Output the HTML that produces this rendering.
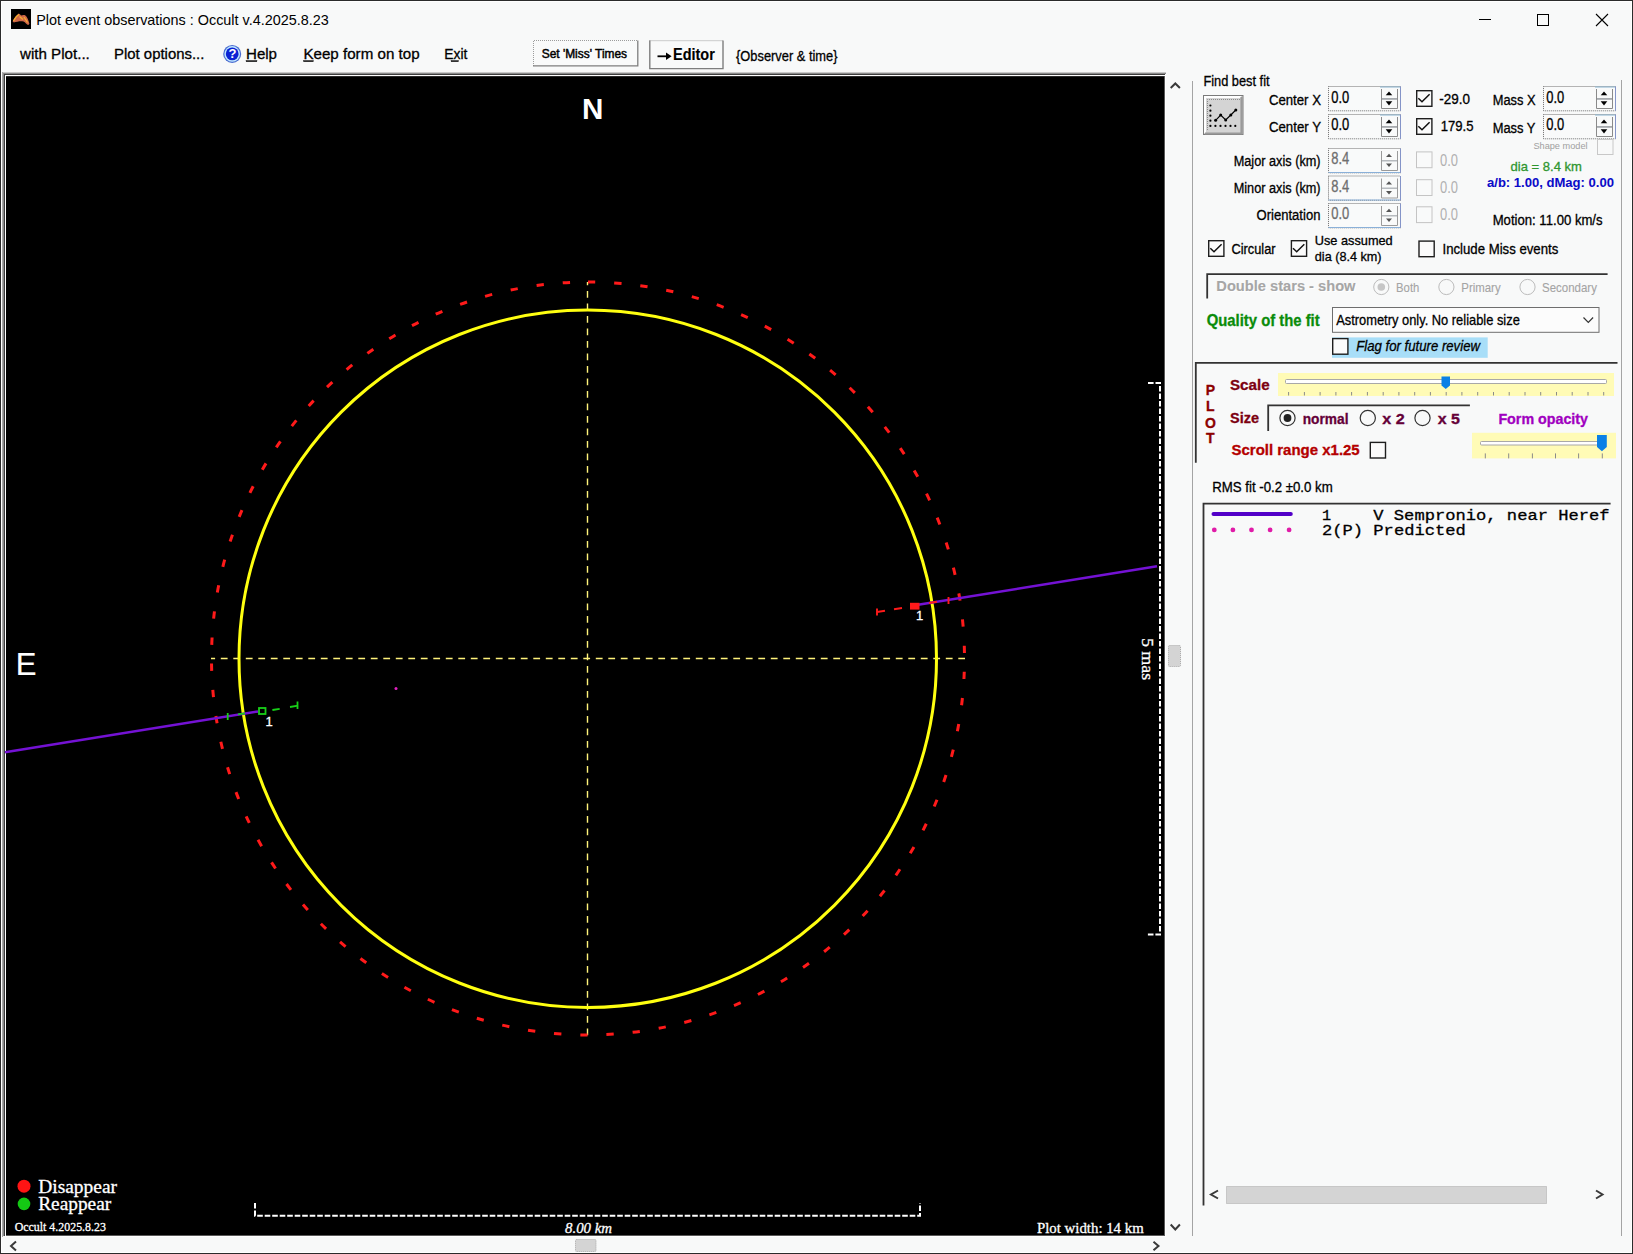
<!DOCTYPE html>
<html><head><meta charset="utf-8">
<style>
html,body{margin:0;padding:0;width:1633px;height:1254px;overflow:hidden;background:#f8f9f9;}
svg{display:block;}
text{font-family:"Liberation Sans",sans-serif;}
.ser{font-family:"Liberation Serif",serif;}
.mono,.mono text{font-family:"Liberation Mono",monospace;}
</style></head><body>
<svg width="1633" height="1254" viewBox="0 0 1633 1254">
<!-- window bg & border -->
<rect x="0" y="0" width="1633" height="1254" fill="#f8f9f9"/>
<rect x="0.5" y="0.5" width="1632" height="1253" fill="none" stroke="#2b2b2b"/>
<rect x="1.5" y="1.5" width="1630" height="1251" fill="none" stroke="#ffffff"/>

<!-- title bar -->
<rect x="11" y="9" width="20" height="20" fill="#000"/>
<path d="M12.6 21.3 C14 18.5 16.5 15 18.8 13.6 C19.8 14.2 20.5 15.2 21.2 15.6 C22.5 15 24 14.8 25.4 15.4 C27 16.8 28.6 20 29.4 23.8 C29 25 28 25.2 27.2 24.6 C25.6 22.8 24 21.4 22.2 21.2 C19.5 21 16.5 21.6 13.8 22.6 Z" fill="#d06848"/>
<path d="M13.5 21 C15 18 17 15.5 19 14.5 M19.5 16.5 L23 19.5 M24 17 L27.5 22.5" fill="none" stroke="#f5b030" stroke-width="1.2"/>
<text x="36.2" y="25" font-size="14.4" textLength="292.5" lengthAdjust="spacingAndGlyphs" fill="#000">Plot event observations : Occult v.4.2025.8.23</text>
<rect x="1479" y="19" width="12" height="1" fill="#000"/>
<rect x="1537.5" y="14.5" width="11" height="11" fill="none" stroke="#000"/>
<path d="M1596 14 L1608 26 M1608 14 L1596 26" stroke="#000" stroke-width="1.1" fill="none"/>

<!-- menu -->
<g font-size="15" fill="#000" stroke="#000" stroke-width="0.3">
<text x="20" y="58.9" textLength="69.8" lengthAdjust="spacingAndGlyphs">with Plot...</text>
<text x="114" y="58.9" textLength="90.4" lengthAdjust="spacingAndGlyphs">Plot options...</text>
<text x="246" y="58.9" textLength="31" lengthAdjust="spacingAndGlyphs">Help</text>
<rect x="246" y="60.5" width="11" height="1.2"/>
<text x="303.4" y="58.9" textLength="116.2" lengthAdjust="spacingAndGlyphs">Keep form on top</text>
<rect x="303.5" y="60.5" width="10" height="1.2"/>
<text x="444.3" y="58.9" textLength="23.1" lengthAdjust="spacingAndGlyphs">Exit</text>
<rect x="451" y="60.5" width="7.6" height="1.2"/>
</g>
<circle cx="232.2" cy="53.9" r="9" fill="#4a6cd0"/>
<circle cx="232.2" cy="53.9" r="7.8" fill="#bfe8ff"/>
<circle cx="232.2" cy="53.9" r="6.4" fill="#0a22d4"/>
<text x="232.6" y="58.4" font-size="13" font-weight="bold" fill="#fff" text-anchor="middle">?</text>

<!-- buttons -->
<rect x="533" y="40" width="105.5" height="26.5" fill="#f9fafa"/>
<path d="M533.5 66 V40.5 H638" fill="none" stroke="#9c9c9c" stroke-dasharray="1 1"/>
<path d="M637.8 40.5 V65.8 H533" fill="none" stroke="#7e7e7e" stroke-width="1.3"/>
<text x="541.7" y="57.6" font-size="12.2" textLength="85.4" lengthAdjust="spacingAndGlyphs" fill="#000" stroke="#000" stroke-width="0.45">Set 'Miss' Times</text>
<rect x="649" y="40" width="74.5" height="29" fill="#f9fafa"/>
<path d="M649.5 40.7 H723" fill="none" stroke="#9c9c9c" stroke-dasharray="1 1"/>
<path d="M649.8 40.5 V68.6 H723 V40.5" fill="none" stroke="#7e7e7e" stroke-width="1.4"/>
<path d="M657.5 56.3 H668" stroke="#000" stroke-width="1.8"/>
<path d="M666 52.5 L671.6 56.3 L666 60.1 Z" fill="#000"/>
<text x="673.1" y="60.2" font-size="15.8" font-weight="bold" textLength="41.7" lengthAdjust="spacingAndGlyphs" fill="#000" stroke="#000" stroke-width="0.15">Editor</text>
<text x="736" y="61" font-size="14.5" textLength="101.5" lengthAdjust="spacingAndGlyphs" fill="#000" stroke="#000" stroke-width="0.3">{Observer &amp; time}</text>

<!-- PLOT FRAME -->
<rect x="2" y="72" width="1164" height="1" fill="#c8c8c8"/>
<rect x="2" y="73" width="1164" height="1" fill="#8a8a8a"/>
<rect x="3" y="74" width="1162" height="1" fill="#3e3e3e"/>
<rect x="2" y="72" width="1" height="1165" fill="#a8a8a8"/>
<rect x="3" y="73" width="1" height="1163" fill="#8c8c8c"/>
<rect x="4" y="74" width="1" height="1162" fill="#3c3c3c"/>
<rect x="5" y="75" width="1161" height="1" fill="#ffffff"/>
<rect x="5" y="75" width="1" height="1162" fill="#ffffff"/>
<rect x="1165" y="75" width="1" height="1162" fill="#ffffff"/>
<rect x="5" y="1236" width="1161" height="1" fill="#ffffff"/>
<rect x="6" y="76" width="1159" height="1160" fill="#585858"/>
<rect x="6" y="76" width="1158" height="1" fill="#2a2a2a"/>
<rect x="6" y="77" width="1158" height="1158" fill="#000"/>

<!-- plot content -->
<g id="plot">
<text x="592.6" y="118.7" font-size="29.6" font-weight="bold" fill="#fff" text-anchor="middle">N</text>
<text x="15.8" y="675.2" font-size="31" fill="#fff" stroke="#fff" stroke-width="0.2">E</text>
<!-- dashed cross -->
<line x1="211" y1="658.5" x2="965" y2="658.5" stroke="#fff27a" stroke-width="1.4" stroke-dasharray="6.8 5.7" stroke-dashoffset="2.7"/>
<line x1="587.5" y1="282" x2="587.5" y2="1035.5" stroke="#fff27a" stroke-width="1.4" stroke-dasharray="6.8 5.7" stroke-dashoffset="3.5"/>
<!-- red dashed circle -->
<path d="M588 282 A376.5 376.5 0 0 1 588 1035 A376.5 376.5 0 0 1 588 282" fill="none" stroke="#ff1a1a" stroke-width="3" stroke-dasharray="7.3 18.984"/>
<!-- yellow circle -->
<circle cx="587.75" cy="658.75" r="348.75" fill="none" stroke="#ffff10" stroke-width="3"/>
<!-- chord -->
<line x1="5" y1="752.3" x2="258" y2="711.4" stroke="#7412d4" stroke-width="2.5"/>
<line x1="915" y1="605.3" x2="1157" y2="566.3" stroke="#7412d4" stroke-width="2.5"/>
<!-- green markers -->
<g stroke="#18d018" fill="none" stroke-width="1.8">
<line x1="227.7" y1="713" x2="227.7" y2="720"/>
<line x1="238" y1="714.4" x2="245" y2="713.3"/>
<rect x="259" y="708" width="6.5" height="6" fill="none"/>
<line x1="272.4" y1="710" x2="279.7" y2="708.8"/>
<line x1="290" y1="707" x2="298" y2="705.6"/>
<line x1="297.5" y1="701.5" x2="297.5" y2="709"/>
</g>
<text x="265.5" y="725.5" font-size="13" fill="#fff" stroke="#fff" stroke-width="0.3">1</text>
<!-- red markers -->
<g stroke="#ff1a1a" fill="none" stroke-width="1.9">
<line x1="877" y1="608.5" x2="877" y2="615.5"/>
<line x1="877" y1="612" x2="885" y2="610.7"/>
<line x1="894" y1="609.3" x2="902" y2="608"/>
<rect x="911" y="603.8" width="7.5" height="4.8" fill="#ff1a1a" stroke-width="2"/>
<line x1="929" y1="603" x2="937" y2="601.7"/>
<line x1="948.5" y1="597" x2="948.5" y2="604"/>
</g>
<text x="916" y="620.3" font-size="13" fill="#fff" stroke="#fff" stroke-width="0.3">1</text>
<circle cx="396" cy="688.5" r="1.5" fill="#e020c0"/>
<!-- scale bars -->
<g stroke="#fff" stroke-width="2" fill="none" stroke-dasharray="5.6 1.9">
<path d="M255 1203 L255 1215.8 L920 1215.8 L920 1203"/>
<path d="M1148 383 L1160 383 L1160 934.5 L1147 934.5"/>
</g>
<text x="565" y="1233" class="ser" font-size="15.5" font-style="italic" fill="#fff" textLength="47" lengthAdjust="spacingAndGlyphs" stroke="#fff" stroke-width="0.3">8.00 km</text>
<text x="1037" y="1233" class="ser" font-size="15" fill="#fff" textLength="106.7" lengthAdjust="spacingAndGlyphs" stroke="#fff" stroke-width="0.3">Plot width: 14 km</text>
<text transform="translate(1141.5 637.9) rotate(90)" class="ser" font-size="17" fill="#fff" textLength="42.4" lengthAdjust="spacingAndGlyphs" stroke="#fff" stroke-width="0.3">5 mas</text>
<!-- legend -->
<circle cx="24" cy="1186.2" r="6.5" fill="#ff1414"/>
<circle cx="24" cy="1203.9" r="6.3" fill="#14c814"/>
<text x="38.2" y="1192.7" class="ser" font-size="19.4" fill="#fff" textLength="78.8" lengthAdjust="spacingAndGlyphs" stroke="#fff" stroke-width="0.3">Disappear</text>
<text x="38.2" y="1210.2" class="ser" font-size="19.4" fill="#fff" textLength="73" lengthAdjust="spacingAndGlyphs" stroke="#fff" stroke-width="0.3">Reappear</text>
<text x="14.7" y="1231" class="ser" font-size="13" fill="#fff" textLength="91.2" lengthAdjust="spacingAndGlyphs" stroke="#fff" stroke-width="0.3">Occult 4.2025.8.23</text>
</g>

<!-- scrollbars of plot -->
<path d="M1170.7 88 L1175.3 83.5 L1179.9 88" stroke="#3a3a3a" stroke-width="2" fill="none"/>
<path d="M1170.7 1224.5 L1175.3 1229.5 L1179.9 1224.5" stroke="#3a3a3a" stroke-width="2" fill="none"/>
<rect x="1168.5" y="645.5" width="12" height="21" rx="1" fill="#d4d4d4" stroke="#a8a8a8" stroke-dasharray="1 1"/>
<path d="M16 1241.5 L11 1246 L16 1250.5" stroke="#3a3a3a" stroke-width="2" fill="none"/>
<path d="M1153.5 1241.8 L1158.5 1246 L1153.5 1250.3" stroke="#3a3a3a" stroke-width="2" fill="none"/>
<rect x="575.5" y="1239.5" width="20.5" height="12" rx="1" fill="#d4d4d4" stroke="#a8a8a8" stroke-dasharray="1 1"/>


<!-- RIGHT PANEL -->
<defs>
<g id="nud">
<rect x="0.5" y="0.5" width="72" height="24.3" fill="#f9fafa" stroke="#6e6e6e" stroke-dasharray="1 1"/>
<line x1="72.5" y1="0.5" x2="72.5" y2="24.8" stroke="#8494c8"/>
<line x1="52" y1="1" x2="72" y2="1" stroke="#8ab4d0"/>
<path d="M53.5 3 V22.5 H69.5 V3" fill="none" stroke="#8a8a8a"/>
<rect x="54" y="12" width="15" height="1.8" fill="#a6aaae"/>
<path d="M57.7 9.3 L61 5.4 L64.3 9.3 Z" fill="#000"/>
<path d="M57.7 15.2 L64.3 15.2 L61 19.5 Z" fill="#000"/>
</g>
<g id="nudd">
<rect x="0.5" y="0.5" width="72" height="24.3" fill="#f9fafa" stroke="#6e6e6e" stroke-dasharray="1 1"/>
<line x1="72.5" y1="0.5" x2="72.5" y2="24.8" stroke="#8494c8"/>
<line x1="0.5" y1="24.5" x2="72" y2="24.5" stroke="#8ab0d8"/>
<path d="M53.5 3 V22.5 H69.5 V3" fill="none" stroke="#9a9a9a"/>
<rect x="54" y="12" width="15" height="1.5" fill="#b6babe"/>
<path d="M58 9 L61 5.8 L64 9 Z" fill="#555"/>
<path d="M58 15.5 L64 15.5 L61 19 Z" fill="#555"/>
</g>
<g id="chk">
<rect x="0.7" y="0.7" width="15.2" height="15.6" fill="#fbfbfb" stroke="#1e1e1e" stroke-width="1.4"/>
</g>
<g id="chkd">
<rect x="0.5" y="0.5" width="15.5" height="15.8" fill="#f9fafa" stroke="#c4c4c4" stroke-width="1"/>
</g>
</defs>

<rect x="1192" y="81" width="1" height="1155" fill="#a4a4a4"/>
<rect x="1621" y="80" width="1" height="1156" fill="#a4a4a4"/>

<g font-size="14" fill="#000" stroke="#000" stroke-width="0.3">
<text x="1203.4" y="86.2" textLength="66.2" lengthAdjust="spacingAndGlyphs">Find best fit</text>
<text x="1268.9" y="104.5" textLength="52.1" lengthAdjust="spacingAndGlyphs">Center X</text>
<text x="1268.9" y="132" textLength="52.1" lengthAdjust="spacingAndGlyphs">Center Y</text>
<text x="1233.7" y="165.6" textLength="86.9" lengthAdjust="spacingAndGlyphs">Major axis (km)</text>
<text x="1233.7" y="193.2" textLength="86.9" lengthAdjust="spacingAndGlyphs">Minor axis (km)</text>
<text x="1256.6" y="219.5" textLength="63.8" lengthAdjust="spacingAndGlyphs">Orientation</text>
<text x="1439.2" y="103.5" textLength="30.7" lengthAdjust="spacingAndGlyphs">-29.0</text>
<text x="1440.7" y="131.4" textLength="32.8" lengthAdjust="spacingAndGlyphs">179.5</text>
<text x="1492.7" y="105" textLength="42.8" lengthAdjust="spacingAndGlyphs">Mass X</text>
<text x="1492.7" y="132.6" textLength="42.8" lengthAdjust="spacingAndGlyphs">Mass Y</text>
<text x="1492.7" y="224.9" textLength="109.9" lengthAdjust="spacingAndGlyphs">Motion: 11.00 km/s</text>
<text x="1231.5" y="253.9" textLength="44.1" lengthAdjust="spacingAndGlyphs">Circular</text>
<text x="1314.8" y="245" font-size="13" textLength="77.9" lengthAdjust="spacingAndGlyphs">Use assumed</text>
<text x="1314.8" y="260.7" font-size="13" textLength="66.8" lengthAdjust="spacingAndGlyphs">dia (8.4 km)</text>
<text x="1442.5" y="253.5" textLength="115.8" lengthAdjust="spacingAndGlyphs">Include Miss events</text>
<text x="1212.2" y="492" textLength="120.5" lengthAdjust="spacingAndGlyphs">RMS fit -0.2 ±0.0 km</text>
</g>

<!-- fit button -->
<rect x="1203.5" y="95.5" width="39.5" height="39" fill="#d4d4d4" stroke="#7a7a7a"/>
<path d="M1205 133 V97 H1241" fill="none" stroke="#fff" stroke-width="2"/>
<path d="M1241.5 97 V133.5 H1205" fill="none" stroke="#9a9a9a" stroke-width="2.2"/>
<path d="M1207.5 130 V99.5 H1240" fill="none" stroke="#8a8a8a" stroke-dasharray="1 1"/>
<g fill="#000">
<circle cx="1210.4" cy="105.5" r="1.1"/><circle cx="1210.4" cy="110.7" r="1.1"/><circle cx="1210.4" cy="115.7" r="1.1"/><circle cx="1210.4" cy="120.7" r="1.1"/>
<circle cx="1210.4" cy="125.9" r="1.1"/><circle cx="1215.4" cy="125.9" r="1.1"/><circle cx="1220.5" cy="125.9" r="1.1"/><circle cx="1225.5" cy="125.9" r="1.1"/><circle cx="1230.5" cy="125.9" r="1.1"/><circle cx="1235.3" cy="125.9" r="1.1"/>
<circle cx="1215.6" cy="120.3" r="1.5"/><circle cx="1220.7" cy="115" r="1.5"/><circle cx="1225.7" cy="120" r="1.5"/><circle cx="1230.8" cy="115" r="1.5"/><circle cx="1235.8" cy="110" r="1.5"/>
</g>
<path d="M1215.6 120.3 L1220.7 115 L1225.7 120 L1230.8 115 L1235.8 110" fill="none" stroke="#000" stroke-width="1.1"/>

<use href="#nud" x="1328" y="86"/>
<use href="#nud" x="1328" y="114"/>
<use href="#nudd" x="1328" y="148"/>
<use href="#nudd" x="1328" y="175.5"/>
<use href="#nudd" x="1328" y="203"/>
<use href="#nud" x="1543" y="86"/>
<use href="#nud" x="1543" y="114"/>
<g font-size="15.6" fill="#000" stroke="#000" stroke-width="0.3">
<text x="1331.3" y="102.6" textLength="18" lengthAdjust="spacingAndGlyphs">0.0</text>
<text x="1331.3" y="130.4" textLength="18" lengthAdjust="spacingAndGlyphs">0.0</text>
<text x="1546.3" y="102.6" textLength="18" lengthAdjust="spacingAndGlyphs">0.0</text>
<text x="1546.3" y="130.4" textLength="18" lengthAdjust="spacingAndGlyphs">0.0</text>
</g>
<g font-size="15.6" fill="#6e6e6e" stroke="#6e6e6e" stroke-width="0.3">
<text x="1331.3" y="164.4" textLength="18" lengthAdjust="spacingAndGlyphs">8.4</text>
<text x="1331.3" y="192" textLength="18" lengthAdjust="spacingAndGlyphs">8.4</text>
<text x="1331.3" y="219.2" textLength="18" lengthAdjust="spacingAndGlyphs">0.0</text>
</g>

<use href="#chk" x="1416" y="90"/>
<use href="#chk" x="1416" y="118"/>
<path d="M1418.3 98.2 L1422 101.7 L1429.6 94.2 M1418.3 126.2 L1422 129.7 L1429.6 122.2" fill="none" stroke="#111" stroke-width="1.5"/>
<use href="#chkd" x="1416" y="151.4"/>
<use href="#chkd" x="1416" y="179.2"/>
<use href="#chkd" x="1416" y="206.3"/>
<g font-size="15.6" fill="#b0b0b0">
<text x="1440" y="165.7" textLength="18" lengthAdjust="spacingAndGlyphs">0.0</text>
<text x="1440" y="193" textLength="18" lengthAdjust="spacingAndGlyphs">0.0</text>
<text x="1440" y="220.3" textLength="18" lengthAdjust="spacingAndGlyphs">0.0</text>
</g>
<text x="1533.4" y="149" font-size="9.5" fill="#a0a0a0" textLength="54.2" lengthAdjust="spacingAndGlyphs">Shape model</text>
<rect x="1597.5" y="139.5" width="15.5" height="15" fill="none" stroke="#c8c8c8"/>
<text x="1510.6" y="170.6" font-size="13" fill="#2f962f" textLength="71.3" lengthAdjust="spacingAndGlyphs" stroke="#2f962f" stroke-width="0.3">dia = 8.4 km</text>
<text x="1487" y="187.2" font-size="13.6" font-weight="bold" fill="#0a0ac8" textLength="127" lengthAdjust="spacingAndGlyphs" stroke="#0a0ac8" stroke-width="0.05">a/b: 1.00, dMag: 0.00</text>

<use href="#chk" x="1208" y="240"/>
<use href="#chk" x="1290.7" y="240"/>
<path d="M1210.3 248.2 L1214 251.7 L1221.6 244.2 M1293 248.2 L1296.7 251.7 L1304.3 244.2" fill="none" stroke="#111" stroke-width="1.5"/>
<use href="#chk" x="1418.3" y="240.4"/>

<!-- double stars group -->
<path d="M1207.2 298.5 V274.2 H1607.6" fill="none" stroke="#333" stroke-width="1.8"/>
<text x="1217.3" y="292.1" font-size="14.5" font-weight="bold" fill="#ffffff" textLength="139.2" lengthAdjust="spacingAndGlyphs">Double stars - show</text>
<text x="1216.3" y="291.1" font-size="14.5" font-weight="bold" fill="#a6a6a6" textLength="139.2" lengthAdjust="spacingAndGlyphs" stroke="#a6a6a6" stroke-width="0.1">Double stars - show</text>
<g fill="none" stroke="#bcbcbc" stroke-width="1">
<circle cx="1381.3" cy="287" r="7.6"/>
<circle cx="1446.4" cy="287" r="7.6"/>
<circle cx="1527.5" cy="287" r="7.6"/>
</g>
<circle cx="1381.3" cy="287" r="3.8" fill="#c6c6c6"/>
<g font-size="13" fill="#a4a4a4" stroke="#a4a4a4" stroke-width="0.1">
<text x="1396.1" y="292.3" textLength="23.2" lengthAdjust="spacingAndGlyphs">Both</text>
<text x="1461.3" y="292.3" textLength="39.3" lengthAdjust="spacingAndGlyphs">Primary</text>
<text x="1542" y="292.3" textLength="54.9" lengthAdjust="spacingAndGlyphs">Secondary</text>
</g>

<!-- quality -->
<text x="1206.7" y="325.6" font-size="15.8" font-weight="bold" fill="#0a8c0a" textLength="113" lengthAdjust="spacingAndGlyphs" stroke="#0a8c0a" stroke-width="0.3">Quality of the fit</text>
<rect x="1332.5" y="307.5" width="266.5" height="24.8" fill="#fcfcfc" stroke="#6e6e6e"/>
<text x="1336.2" y="324.9" font-size="15" fill="#000" textLength="183.6" lengthAdjust="spacingAndGlyphs" stroke="#000" stroke-width="0.3">Astrometry only. No reliable size</text>
<path d="M1583.5 317.5 L1588.3 322.3 L1593.1 317.5" fill="none" stroke="#333" stroke-width="1.2"/>
<rect x="1332" y="337.4" width="155.7" height="20.4" fill="#a8def8"/>
<use href="#chk" x="1332" y="337.9"/>
<text x="1356.2" y="351" font-size="14" font-style="italic" fill="#000" textLength="123.8" lengthAdjust="spacingAndGlyphs" stroke="#000" stroke-width="0.3">Flag for future review</text>

<!-- PLOT group -->
<path d="M1195.8 462.8 V362.8 H1617.5" fill="none" stroke="#333" stroke-width="1.8"/>
<g font-size="14" font-weight="bold" fill="#8c0000" text-anchor="middle" stroke="#8c0000" stroke-width="0.3">
<text x="1210.4" y="394.5">P</text>
<text x="1210.4" y="411.4">L</text>
<text x="1210.4" y="427.6">O</text>
<text x="1210.4" y="443">T</text>
</g>
<g font-size="14.5" font-weight="bold" fill="#7c0010" stroke="#7c0010" stroke-width="0.3">
<text x="1230" y="390.3" textLength="39.6" lengthAdjust="spacingAndGlyphs">Scale</text>
<text x="1230" y="422.7" textLength="29" lengthAdjust="spacingAndGlyphs">Size</text>
<text x="1302.7" y="424" textLength="45.8" lengthAdjust="spacingAndGlyphs" fill="#640038" stroke="#640038">normal</text>
<text x="1382.3" y="424" textLength="22.5" lengthAdjust="spacingAndGlyphs" fill="#640038" stroke="#640038">x 2</text>
<text x="1437.8" y="424" textLength="22.2" lengthAdjust="spacingAndGlyphs" fill="#640038" stroke="#640038">x 5</text>
</g>
<text x="1231.5" y="455" font-size="15" font-weight="bold" fill="#b40000" textLength="128.2" lengthAdjust="spacingAndGlyphs" stroke="#b40000" stroke-width="0.3">Scroll range x1.25</text>
<text x="1498.4" y="423.5" font-size="14.5" font-weight="bold" fill="#a000c0" textLength="89.6" lengthAdjust="spacingAndGlyphs" stroke="#a000c0" stroke-width="0.3">Form opacity</text>
<use href="#chk" x="1369.6" y="441.7"/>
<path d="M1268.2 431 V405.4 H1469.9" fill="none" stroke="#333" stroke-width="1.8"/>
<g fill="none" stroke="#333" stroke-width="1.2">
<circle cx="1287.5" cy="418" r="7.6"/>
<circle cx="1367.8" cy="418" r="7.6"/>
<circle cx="1422.5" cy="418" r="7.6"/>
</g>
<circle cx="1287.5" cy="418" r="3.9" fill="#222"/>

<!-- sliders -->
<rect x="1278" y="373" width="336" height="23" fill="#fffbb6"/>
<rect x="1285.5" y="379.5" width="321" height="4" rx="1" fill="#ffffff" stroke="#a8a8a8"/>
<path d="M1441.5 376.5 H1450 V385.5 L1445.75 389 L1441.5 385.5 Z" fill="#0a80e6"/>
<g stroke="#8a8a8a" stroke-width="1">
<path d="M1288.6 392 V395.5 M1304.4 392 V395.5 M1320.1 392 V395.5 M1335.9 392 V395.5 M1351.6 392 V395.5 M1367.4 392 V395.5 M1383.2 392 V395.5 M1398.9 392 V395.5 M1414.7 392 V395.5 M1430.4 392 V395.5 M1446.2 392 V395.5 M1461.9 392 V395.5 M1477.7 392 V395.5 M1493.5 392 V395.5 M1509.2 392 V395.5 M1525 392 V395.5 M1540.7 392 V395.5 M1556.5 392 V395.5 M1572.2 392 V395.5 M1588 392 V395.5 M1603.7 392 V395.5"/>
</g>
<rect x="1472" y="432.8" width="144" height="25.6" fill="#fffbb6"/>
<rect x="1480.5" y="441.5" width="121" height="3.5" rx="1" fill="#ffffff" stroke="#a8a8a8"/>
<path d="M1597 435 H1606.8 V447 L1601.9 451.3 L1597 447 Z" fill="#0a80e6"/>
<g stroke="#8a8a8a" stroke-width="1">
<path d="M1485.3 453.4 V458.4 M1508.7 453.4 V458.4 M1532.4 453.4 V458.4 M1555.5 453.4 V458.4 M1578.6 453.4 V458.4 M1602.3 453.4 V458.4"/>
</g>

<!-- listbox -->
<path d="M1203.5 1205.5 V503.7 H1610.6" fill="none" stroke="#333" stroke-width="1.8"/>
<rect x="1211.5" y="512" width="81.3" height="4" rx="2" fill="#5200c8"/>
<g fill="#e01ca8">
<circle cx="1214.3" cy="529.9" r="2.4"/><circle cx="1232.9" cy="529.9" r="2.4"/><circle cx="1251.5" cy="529.9" r="2.4"/><circle cx="1270.1" cy="529.9" r="2.4"/><circle cx="1289.1" cy="529.9" r="2.4"/>
</g>
<g class="mono" font-size="15.2" fill="#000" stroke="#000" stroke-width="0.3">
<text x="1322" y="519.8">1</text>
<text x="1373.3" y="519.8" textLength="236.3" lengthAdjust="spacingAndGlyphs">V Sempronio, near Heref</text>
<text x="1322" y="534.7" textLength="143.8" lengthAdjust="spacingAndGlyphs">2(P) Predicted</text>
</g>
<path d="M1218 1190.5 L1211 1194.5 L1218 1198.5" fill="none" stroke="#3a3a3a" stroke-width="2"/>
<rect x="1226.5" y="1186.5" width="320" height="17" fill="#d4d4d4" stroke="#a8a8a8" stroke-dasharray="1 1"/>
<path d="M1596 1190.5 L1602.5 1194.5 L1596 1198.5" fill="none" stroke="#3a3a3a" stroke-width="2"/>
</svg>
</body></html>
